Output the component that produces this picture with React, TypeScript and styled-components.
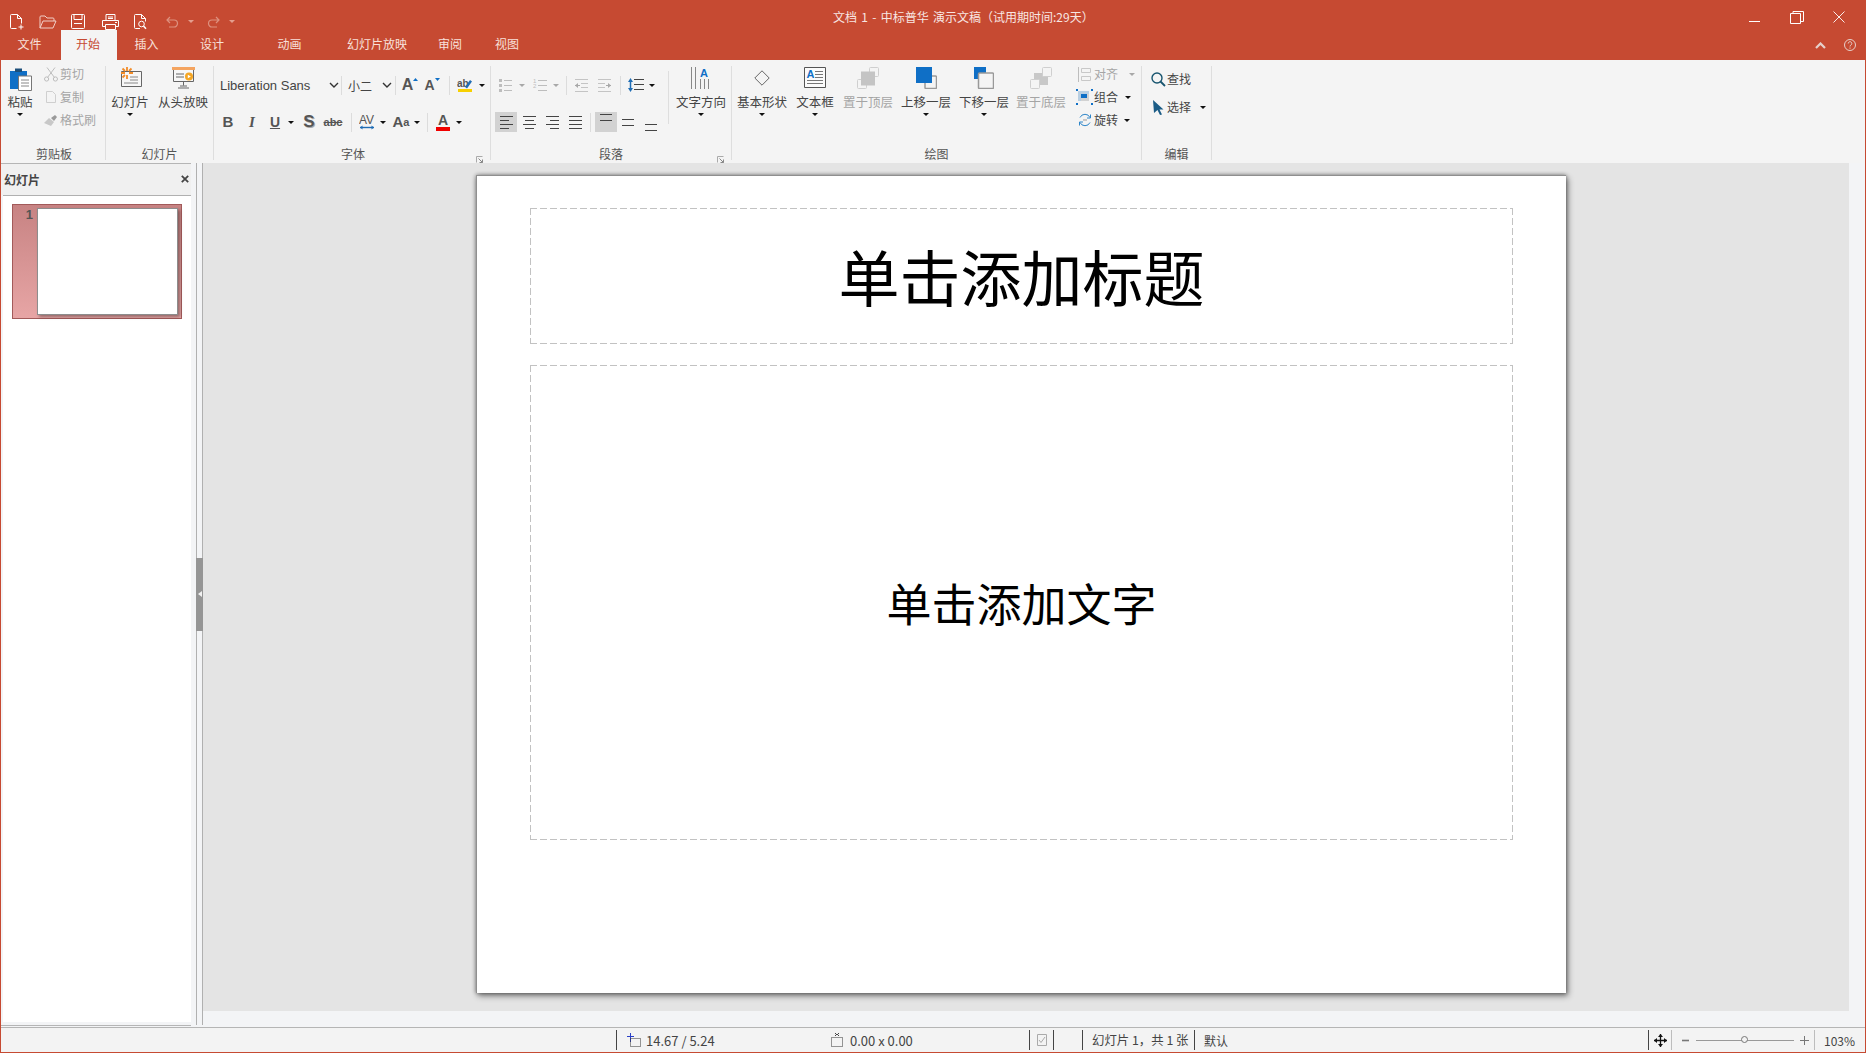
import React from 'react';
import styled, { createGlobalStyle } from 'styled-components';

const RED = '#c64a32';
const CJK = '"Noto Sans CJK SC", "Noto Sans", sans-serif';
const LATIN = '"Liberation Sans", "Noto Sans CJK SC", sans-serif';
const SERIF = '"Liberation Serif", serif';

const GlobalStyle = createGlobalStyle`
  html, body { margin: 0; padding: 0; background: ${RED}; }
  body { font-family: ${CJK}; font-size: 12px; color: #444; overflow: hidden; }
  svg { display: block; }
`;

const Window = styled.div`
  width: 1866px;
  height: 1053px;
  box-sizing: border-box;
  border: 1px solid ${RED};
  border-top: 0;
  display: flex;
  flex-direction: column;
  overflow: hidden;
`;

/* title bar */
const TitleBar = styled.div`
  height: 30px;
  flex: none;
  background: ${RED};
  display: flex;
  align-items: flex-start;
  color: #f8e6e2;
`;
const QuickBar = styled.div`
  width: 832px;
  flex: none;
  display: flex;
  align-items: center;
  padding-top: 13px;
  box-sizing: border-box;
  height: 30px;
`;
const QuickItem = styled.div<{ $ml: number }>`
  margin-left: ${p => p.$ml}px;
  flex: none;
`;
const DocTitle = styled.div`
  font-size: 12px;
  line-height: 16px;
  margin-top: 9px;
  word-spacing: 1.6px;
  white-space: nowrap;
`;
const WinButtons = styled.div`
  margin-left: auto;
  display: flex;
  align-items: flex-start;
  padding-top: 11px;
  margin-right: 20px;
  gap: 29px;
`;

/* tab row */
const TabRow = styled.div`
  height: 30px;
  flex: none;
  background: ${RED};
  display: flex;
  align-items: stretch;
`;
const Tab = styled.div<{ $w: number; $pr?: number; $active?: boolean }>`
  width: ${p => p.$w}px;
  flex: none;
  box-sizing: border-box;
  padding-right: ${p => p.$pr ?? 0}px;
  text-align: center;
  font-size: 12px;
  line-height: 28px;
  color: ${p => (p.$active ? RED : '#f8e0da')};
  background: ${p => (p.$active ? '#f4f4f4' : 'transparent')};
`;
const TabTools = styled.div`
  margin-left: auto;
  display: flex;
  align-items: center;
  gap: 18px;
  padding-right: 9px;
`;

/* ribbon */
const Ribbon = styled.div`
  height: 103px;
  flex: none;
  box-sizing: border-box;
  background: #f4f4f4;
  display: flex;
  padding-top: 6px;
`;
const Group = styled.div<{ $w: number }>`
  position: relative;
  width: ${p => p.$w}px;
  height: 94px;
  flex: none;
  box-sizing: border-box;
  border-right: 1px solid #dedede;
  display: flex;
  flex-direction: column;
`;
const GroupBody = styled.div`
  display: flex;
  height: 79px;
  flex: none;
`;
const GroupLabel = styled.div<{ $pl?: number }>`
  height: 18px;
  line-height: 18px;
  padding-left: ${p => p.$pl ?? 0}px;
  text-align: center;
  font-size: 12px;
  color: #555;
  white-space: nowrap;
`;
const Launcher = styled.div`
  position: absolute;
  right: 7px;
  bottom: -3px;
`;
const LargeButton = styled.div<{ $w: number; $ml?: number; $off?: boolean }>`
  width: ${p => p.$w}px;
  margin-left: ${p => p.$ml ?? 0}px;
  flex: none;
  display: flex;
  flex-direction: column;
  align-items: center;
  color: ${p => (p.$off ? '#a5a5a5' : '#444')};
`;
const IconSlot = styled.div<{ $top?: number }>`
  height: ${p => 28 - (p.$top ?? 0)}px;
  display: flex;
  align-items: flex-start;
  justify-content: center;
  padding-top: ${p => p.$top ?? 0}px;
  margin-top: 1px;
  margin-bottom: -1px;
`;
const LargeLabel = styled.div`
  font-size: 12.5px;
  line-height: 16px;
  white-space: nowrap;
`;
const Caret = styled.span<{ $off?: boolean; $ml?: number; $mt?: number }>`
  display: block;
  flex: none;
  width: 0;
  height: 0;
  border-style: solid;
  border-width: 3px 3px 0;
  border-color: ${p => (p.$off ? '#a8a8a8' : '#111')} transparent transparent;
  margin-left: ${p => p.$ml ?? 0}px;
  margin-top: ${p => p.$mt ?? 0}px;
`;
const SmallColumn = styled.div<{ $top?: number; $gap?: number; $ml?: number }>`
  display: flex;
  flex-direction: column;
  gap: ${p => p.$gap ?? 7}px;
  padding-top: ${p => p.$top ?? 0}px;
  margin-left: ${p => p.$ml ?? 0}px;
`;
const SmallItem = styled.div<{ $off?: boolean }>`
  height: 16px;
  display: flex;
  align-items: center;
  font-size: 12px;
  line-height: 16px;
  white-space: nowrap;
  color: ${p => (p.$off ? '#a5a5a5' : '#444')};
`;
const SmallIcon = styled.div<{ $w: number }>`
  width: ${p => p.$w}px;
  flex: none;
  display: flex;
  justify-content: center;
  margin-right: 1px;
`;
const ToolRows = styled.div<{ $w: number }>`
  width: ${p => p.$w}px;
  flex: none;
  display: flex;
  flex-direction: column;
  padding-top: 8px;
  gap: 15px;
`;
const ToolRow = styled.div`
  height: 22px;
  display: flex;
  align-items: center;
`;
const Tool = styled.div<{ $w: number; $ml: number; $on?: boolean; $start?: boolean }>`
  width: ${p => p.$w}px;
  margin-left: ${p => p.$ml}px;
  height: 20px;
  flex: none;
  display: flex;
  align-items: center;
  justify-content: ${p => (p.$start ? 'flex-start' : 'center')};
  background: ${p => (p.$on ? '#d2d2d2' : 'transparent')};
`;
const ToolSep = styled.div<{ $ml: number }>`
  width: 1px;
  height: 19px;
  flex: none;
  margin-left: ${p => p.$ml}px;
  background: #dcdcdc;
`;
const ColumnSep = styled.div`
  width: 1px;
  height: 53px;
  flex: none;
  margin-top: 5px;
  background: #dedede;
`;
const FontName = styled.div`
  font-family: ${LATIN};
  font-size: 13px;
  color: #444;
  white-space: nowrap;
`;
const FontSize = styled.div`
  font-size: 12px;
  color: #444;
  white-space: nowrap;
`;
const Letter = styled.span<{ $size?: number; $serif?: boolean; $italic?: boolean; $bold?: boolean; $under?: boolean; $strike?: boolean; $shadow?: boolean }>`
  font-family: ${p => (p.$serif ? SERIF : LATIN)};
  font-size: ${p => p.$size ?? 14}px;
  line-height: 14px;
  font-weight: ${p => (p.$bold ? 700 : 400)};
  font-style: ${p => (p.$italic ? 'italic' : 'normal')};
  text-decoration: ${p => (p.$under ? 'underline' : p.$strike ? 'line-through' : 'none')};
  text-shadow: ${p => (p.$shadow ? '1px 1px 0 #aaa' : 'none')};
  color: #555;
  white-space: nowrap;
`;
const StackedLetter = styled.div<{ $bar: string }>`
  display: flex;
  flex-direction: column;
  align-items: center;
  font-family: ${LATIN};
  line-height: 12px;
  color: #555;
  font-size: 14px;
  font-weight: 700;
  &::after {
    content: '';
    display: block;
    width: 14px;
    height: 4px;
    background: ${p => p.$bar};
    margin-top: 1px;
  }
`;
const Raised = styled.span`
  display: inline-flex;
  align-items: flex-start;
`;

/* main */
const Main = styled.div`
  flex: 1;
  min-height: 0;
  display: flex;
  background: #f3f4f6;
`;
const Panel = styled.div`
  width: 190px;
  flex: none;
  box-sizing: border-box;
  background: #f3f4f6;
  border-top: 1px solid #b5b5b5;
  border-bottom: 1px solid #b5b5b5;
  display: flex;
  flex-direction: column;
  margin-bottom: 1px;
`;
const PanelHead = styled.div`
  height: 31px;
  flex: none;
  box-sizing: border-box;
  background: #f0f0f0;
  padding: 0 1px 1px 3px;
  display: flex;
  align-items: center;
  justify-content: space-between;
  font-size: 12px;
  font-weight: 700;
  color: #444;
`;
const PanelHeadClose = styled.div`
  margin-right: 1px;
`;
const PanelList = styled.div`
  flex: 1;
  margin: 0 0 3px 2px;
  padding: 8px 0 0 9px;
  background: #fff;
  border-top: 1px solid #b0b0b0;
`;
const Thumb = styled.div`
  width: 170px;
  height: 115px;
  box-sizing: border-box;
  border: 1px solid #a25a5a;
  background: linear-gradient(#c78383, #e7a5a5);
  display: flex;
  padding: 3px 3px 0 0;
`;
const ThumbNo = styled.div`
  width: 24px;
  flex: none;
  text-align: right;
  padding-right: 4px;
  box-sizing: border-box;
  font-family: ${LATIN};
  font-size: 13px;
  font-weight: 700;
  line-height: 14px;
  color: #555;
`;
const ThumbPage = styled.div`
  width: 141px;
  height: 107px;
  box-sizing: border-box;
  background: #fff;
  border: 1px solid #8d8d8d;
  box-shadow: 2px 2px 3px rgba(0, 0, 0, 0.35);
`;
const Splitter = styled.div`
  width: 12px;
  flex: none;
  background: #f3f4f6;
  padding-left: 5px;
  box-sizing: border-box;
`;
const SplitRail = styled.div`
  width: 7px;
  height: 862px;
  box-sizing: border-box;
  border-left: 1px solid #b0b0b0;
  border-right: 1px solid #b0b0b0;
  display: flex;
  align-items: center;
`;
const SplitHandle = styled.div`
  width: 7px;
  height: 73px;
  flex: none;
  margin-left: -1px;
  background: #959595;
  display: flex;
  align-items: center;
  justify-content: center;
  &::before {
    content: '';
    border-style: solid;
    border-width: 3.5px 4px 3.5px 0;
    border-color: transparent #f2f2f2 transparent transparent;
  }
`;
const Workspace = styled.div`
  flex: 1;
  min-width: 0;
  background: #f3f4f6;
  padding: 0 16px 16px 0;
  box-sizing: border-box;
`;
const Canvas = styled.div`
  height: 100%;
  background: #e4e4e4;
  padding: 12px 0 0 273px;
  box-sizing: border-box;
`;
const Slide = styled.div`
  width: 1090px;
  height: 818px;
  box-sizing: border-box;
  background: #fff;
  padding: 33px 53px 0 54px;
  box-shadow: inset 1px 1px 0 #8f8f8f, 0 0 4px rgba(0, 0, 0, 0.45), 2px 3px 6px rgba(0, 0, 0, 0.45);
  display: flex;
  flex-direction: column;
  gap: 21px;
`;
const dash = (dir: string) => `repeating-linear-gradient(${dir}, #c2c2c2 0 7px, transparent 7px 10px)`;
const Placeholder = styled.div<{ $h: number; $size: number }>`
  height: ${p => p.$h}px;
  flex: none;
  box-sizing: border-box;
  background:
    ${dash('90deg')} left top / 100% 1px no-repeat,
    ${dash('90deg')} left bottom / 100% 1px no-repeat,
    ${dash('180deg')} left top / 1px 100% no-repeat,
    ${dash('180deg')} right top / 1px 100% no-repeat;
  display: flex;
  align-items: center;
  justify-content: center;
  font-size: ${p => p.$size}px;
  color: #000;
  padding-bottom: 1px;
`;

/* status bar */
const StatusBar = styled.div`
  height: 25px;
  flex: none;
  box-sizing: border-box;
  background: #f3f3f3;
  border-top: 1px solid #b5b5b5;
  display: flex;
  align-items: center;
  font-size: 12px;
  color: #444;
`;
const StatusCell = styled.div<{ $w: number; $first?: boolean; $light?: boolean; $pl?: number }>`
  width: ${p => p.$w}px;
  height: 20px;
  flex: none;
  box-sizing: border-box;
  border-left: ${p => (p.$first ? '0' : `1px solid ${p.$light ? '#bdbdbd' : '#444'}`)};
  padding-left: ${p => p.$pl ?? 0}px;
  display: flex;
  align-items: center;
  white-space: nowrap;
`;
const StatusIcon = styled.div<{ $mr: number }>`
  margin-right: ${p => p.$mr}px;
  flex: none;
`;
const StatusValue = styled.div<{ $w?: number }>`
  width: ${p => (p.$w ? `${p.$w}px` : 'auto')};
  font-size: 13px;
  flex: none;
`;
const SlideCount = styled.div`
  font-size: 12.4px;
`;
const ZoomTrack = styled.div`
  position: relative;
  width: 98px;
  height: 1px;
  background: #999;
  margin: 0 6px;
  flex: none;
`;
const ZoomKnob = styled.div`
  position: absolute;
  left: 45px;
  top: -4px;
  width: 7px;
  height: 7px;
  box-sizing: border-box;
  border: 1px solid #777;
  border-radius: 50%;
  background: #f3f3f3;
`;

const Svg = ({ w, h, children, style }: { w: number; h: number; children: React.ReactNode; style?: React.CSSProperties }) => (
  <svg width={w} height={h} viewBox={`0 0 ${w} ${h}`} fill="none" style={style}>
    {children}
  </svg>
);

/* quick access icons */
const NewIcon = () => (
  <Svg w={14} h={16}>
    <path d="M6.5 14.5H1.5a1 1 0 0 1-1-1V1.5a1 1 0 0 1 1-1h6l4 4v5M7.5 .5v4h4" stroke="#fff" />
    <path d="M11 10.5v5M8.5 13h5" stroke="#fff" />
  </Svg>
);
const OpenIcon = () => (
  <Svg w={18} h={14}>
    <path d="M1 13V2a1 1 0 0 1 1-1h4l2 2h6a1 1 0 0 1 1 1v2" stroke="#f1cfc7" />
    <path d="M1 13l3-7h13l-3 7z" stroke="#f1cfc7" />
  </Svg>
);
const SaveIcon = () => (
  <Svg w={14} h={15}>
    <path d="M1.5 .5h11a1 1 0 0 1 1 1v12a1 1 0 0 1-1 1h-11a1 1 0 0 1-1-1v-12a1 1 0 0 1 1-1z" stroke="#fff" />
    <path d="M3 .5v5h8v-5M3 9.5h8" stroke="#fff" />
  </Svg>
);
const PrintIcon = () => (
  <Svg w={17} h={16}>
    <path d="M4 6V.5h9V6M.5 6.5h16v6h-3M3.500 12.500h-3v-6" stroke="#fff" />
    <path d="M3.500 10.500h10v5h-10zM6 3h5M6 4.500h5M13 8.500h2" stroke="#fff" />
  </Svg>
);
const PreviewIcon = () => (
  <Svg w={13} h={16}>
    <path d="M6 14.500H1.500a1 1 0 0 1-1-1v-12a1 1 0 0 1 1-1h6l4 4v3M7.500 .5v4h4" stroke="#fff" />
    <circle cx="7.500" cy="10" r="2.800" stroke="#fff" />
    <path d="M9.500 12l2.500 2.800" stroke="#fff" strokeWidth="1.500" />
  </Svg>
);
const UndoIcon = ({ flip }: { flip?: boolean }) => (
  <Svg w={13} h={12} style={flip ? { transform: 'scaleX(-1)' } : undefined}>
    <path d="M4 1L1 4l3 3M1 4h7a3.500 3.500 0 0 1 0 7H3" stroke="#dd917f" strokeWidth="1.200" />
  </Svg>
);
const QuickCaret = () => (
  <Svg w={6} h={3}>
    <path d="M0 0h6L3 3z" fill="#e49e8e" />
  </Svg>
);
const MinIcon = () => (
  <Svg w={12} h={12}>
    <path d="M0 10.500h11" stroke="#fff" />
  </Svg>
);
const RestoreIcon = () => (
  <Svg w={14} h={14}>
    <path d="M.5 2.500h10v10H.5zM3 2.500V.5h10.500v10h-3" stroke="#fff" />
  </Svg>
);
const CloseIcon = () => (
  <Svg w={12} h={12}>
    <path d="M.5 .5l11 11M11.500 .5l-11 11" stroke="#fff" strokeWidth=".9" />
  </Svg>
);
const CollapseIcon = () => (
  <Svg w={11} h={7}>
    <path d="M1 6l4.500-4.500L10 6" stroke="#e6d0cb" strokeWidth="2.200" />
  </Svg>
);
const HelpIcon = () => (
  <svg width="12" height="12" viewBox="0 0 12 12" fill="none">
    <circle cx="6" cy="6" r="5.500" stroke="#e6d0cb" />
    <path d="M4.200 4.500a1.800 1.800 0 1 1 2.800 1.500c-.7.4-1 .8-1 1.500M6 8.500v1.200" stroke="#e6d0cb" />
  </svg>
);

/* clipboard */
const PasteIcon = () => (
  <Svg w={23} h={24}>
    <path d="M1 4h17v18H1z" fill="#0f6fc6" />
    <path d="M6 1.500h7V5H6z" fill="#1c4f7a" />
    <path d="M9.500 9h13v14.500h-13z" fill="#fff" stroke="#777" />
    <path d="M12 13h8M12 16h8M12 19h8" stroke="#888" />
  </Svg>
);
const CutIcon = () => (
  <Svg w={14} h={15}>
    <path d="M3 .5l7.500 10M11 .5L3.500 10.500" stroke="#bdbdbd" />
    <circle cx="2.600" cy="12" r="2.100" stroke="#bdbdbd" />
    <circle cx="11.400" cy="12" r="2.100" stroke="#bdbdbd" />
  </Svg>
);
const CopyIcon = () => (
  <Svg w={10} h={12}>
    <path d="M.5 .5h6l3 3v8h-9z" stroke="#cfcfcf" />
  </Svg>
);
const BrushIcon = () => (
  <Svg w={14} h={13}>
    <path d="M5 4l5 4-3 4-7-3z" fill="#c8c8c8" />
    <path d="M7 4l4-3 2 2-3 4z" fill="#9a9a9a" />
  </Svg>
);

/* slides */
const NewSlideIcon = () => (
  <Svg w={24} h={20}>
    <path d="M3.500 4.500h20v15h-20z" fill="#f7f7f7" stroke="#666" />
    <path d="M12 10h8M12 13h8M6 16h14" stroke="#888" />
    <path d="M9 0v4M9 8v4M3 6h4M11 6h4M4.500 1.500L7 4M13.500 1.500L11 4M4.500 10.500L7 8" stroke="#f28c28" strokeWidth="1.800" />
  </Svg>
);
const ShowIcon = () => (
  <Svg w={23} h={22}>
    <path d="M0 0h23v3H0z" fill="#f4a460" />
    <path d="M1.500 3v11.500h20V3" fill="#f7f7f7" stroke="#666" />
    <path d="M4 7h8M4 10h8M11.500 14.500v4M6 21h11M8 19h7" stroke="#666" />
    <circle cx="17" cy="9.500" r="4" fill="#f5a623" />
    <path d="M15.800 7.800l3 1.700-3 1.700z" fill="#fff" />
  </Svg>
);

/* font */
const Chevron = () => (
  <Svg w={10} h={6}>
    <path d="M1 1l4 4 4-4" stroke="#333" strokeWidth="1.400" />
  </Svg>
);
const MiniArrow = ({ up, color }: { up?: boolean; color?: string }) => (
  <Svg w={5} h={3}>
    <path d={up ? 'M0 3h5L2.500 0z' : 'M0 0h5L2.500 3z'} fill={color ?? '#0f6fc6'} />
  </Svg>
);
const HighlightIcon = () => (
  <Svg w={16} h={14}>
    <text x="0" y="9" fontFamily="Liberation Sans" fontSize="10" fill="#555" fontWeight="700">ab</text>
    <path d="M8 9l5-7 2 1.500-5 7z" fill="#1f6db5" />
    <path d="M1 11h14v3H1z" fill="#f7d000" />
  </Svg>
);
const SpacingIcon = () => (
  <Svg w={16} h={16}>
    <text x="0" y="10" fontFamily="Liberation Sans" fontSize="12" fill="#555">AV</text>
    <path d="M1 13.500h14" stroke="#1f6db5" strokeWidth="1.400" />
    <path d="M3.500 11.500L1 13.500l2.500 2zM12.500 11.500l2.500 2-2.500 2z" fill="#1f6db5" />
  </Svg>
);
const DialogIcon = () => (
  <Svg w={7} h={7}>
    <path d="M.5 6.500v-6h6" stroke="#aaa" />
    <path d="M2.500 2.500l4 4M6.500 3.500v3h-3" stroke="#888" />
  </Svg>
);

/* paragraph */
const BulletIcon = () => (
  <Svg w={13} h={14}>
    <path d="M0 1h3v3H0zM0 6h3v3H0zM0 11h3v3H0z" fill="#bdbdbd" />
    <path d="M5 2.500h8M5 7.500h8M5 12.500h8" stroke="#bdbdbd" />
  </Svg>
);
const NumberIcon = () => (
  <Svg w={14} h={14}>
    <text x="0" y="5" fontSize="6" fontFamily="Liberation Sans" fill="#bdbdbd">1</text>
    <text x="0" y="10" fontSize="6" fontFamily="Liberation Sans" fill="#bdbdbd">2</text>
    <path d="M5 2.500h9M5 7.500h9M5 12.500h9" stroke="#bdbdbd" />
  </Svg>
);
const IndentIcon = ({ flip }: { flip?: boolean }) => (
  <Svg w={13} h={13} style={flip ? { transform: 'scaleX(-1)' } : undefined}>
    <path d="M0 .5h13M6 4.500h7M6 8.500h7M0 12.500h13" stroke="#c4c4c4" />
    <path d="M0 6.500h5" stroke="#a8a8a8" />
    <path d="M0 6.500L3 4v5z" fill="#a8a8a8" />
  </Svg>
);
const LineHeightIcon = () => (
  <Svg w={16} h={16}>
    <path d="M6 2.500h10M6 7.500h10M6 12.500h10" stroke="#444" strokeWidth="1.200" />
    <path d="M2.500 4v8" stroke="#1f6db5" strokeWidth="1.500" />
    <path d="M0 5l2.500-4L5 5zM0 11l2.500 4L5 11z" fill="#1f6db5" />
  </Svg>
);
const AlignIcon = ({ rows, w = 13, h = 14 }: { rows: [number, number, number][]; w?: number; h?: number }) => (
  <Svg w={w} h={h}>
    {rows.map(([x1, x2, y]) => (
      <path key={y} d={`M${x1} ${y}.5H${x2}`} stroke="#444" />
    ))}
  </Svg>
);
const TextDirIcon = () => (
  <Svg w={20} h={22}>
    <path d="M.5 0v22M4.500 0v22" stroke="#888" />
    <path d="M9.500 12v10M13.500 12v10M17.500 12v10" stroke="#888" />
    <text x="9" y="10" fontFamily="Liberation Sans" fontSize="11" fontWeight="700" fill="#0f6fc6">A</text>
  </Svg>
);

/* drawing */
const DiamondIcon = () => (
  <Svg w={16} h={16}>
    <path d="M8 .8L15.200 8 8 15.200.8 8z" stroke="#666" />
  </Svg>
);
const TextBoxIcon = () => (
  <Svg w={22} h={21}>
    <path d="M.5 .5h21v20H.5z" stroke="#555" fill="#fbfbfb" />
    <text x="2.500" y="11" fontFamily="Liberation Sans" fontSize="11" fontWeight="700" fill="#0f6fc6">A</text>
    <path d="M11 4.500h8M11 7.500h8M11 10.500h8M3 13.500h16M3 16.500h16" stroke="#777" />
  </Svg>
);
const FrontIcon = () => (
  <Svg w={22} h={22}>
    <rect x="12.500" y=".5" width="9" height="9" rx="1" stroke="#cfcfcf" />
    <rect x=".5" y="12.500" width="9" height="9" rx="1" stroke="#cfcfcf" />
    <path d="M4 4.500h14v14H4z" fill="#c4c4c4" />
  </Svg>
);
const UpIcon = () => (
  <Svg w={21} h={22}>
    <rect x="9" y="9" width="11.500" height="12.500" rx="1" stroke="#999" strokeWidth="1.500" />
    <path d="M0 0h16v16H0z" fill="#0f6fc6" />
  </Svg>
);
const DownIcon = () => (
  <Svg w={20} h={22}>
    <path d="M0 0h12v12H0z" fill="#0f6fc6" />
    <rect x="4.500" y="6" width="15" height="15.500" rx="1" fill="#f4f4f4" stroke="#999" strokeWidth="1.500" />
  </Svg>
);
const BackIcon = () => (
  <Svg w={22} h={22}>
    <path d="M4 6h14v12H4z" fill="#c8c8c8" />
    <rect x="12.500" y=".5" width="9" height="9" rx="1" fill="#f4f4f4" stroke="#cfcfcf" />
    <rect x=".5" y="12.500" width="9" height="9" rx="1" fill="#f4f4f4" stroke="#cfcfcf" />
  </Svg>
);
const AlignObjIcon = () => (
  <Svg w={13} h={15}>
    <path d="M.5 0v15" stroke="#bdbdbd" />
    <path d="M3.500 1.500h9v4h-9zM3.500 9.500h9v4h-9z" stroke="#c8c8c8" />
  </Svg>
);
const GroupIcon = () => (
  <Svg w={17} h={16}>
    <path d="M0 0h2v2H0zM15 0h2v2h-2zM0 14h2v2H0zM15 14h2v2h-2z" fill="#0f6fc6" />
    <path d="M2 2h11v10H2z" fill="#b9cfe2" />
    <path d="M5 5h8v7H5z" fill="#d2d2d2" />
    <path d="M5 5h6v4H5z" fill="#0f6fc6" />
  </Svg>
);
const RotateIcon = () => (
  <Svg w={14} h={14}>
    <path d="M2 4.500A5.500 5.500 0 0 1 12 4.500M12 9.500A5.500 5.500 0 0 1 2 9.500" stroke="#2f86c9" />
    <path d="M12.500 1.500v3.500H9M1.500 12.500V9H5" stroke="#2f86c9" />
    <path d="M5 7h4" stroke="#999" />
  </Svg>
);
const FindIcon = () => (
  <Svg w={15} h={15}>
    <circle cx="6" cy="6" r="5" stroke="#18556f" strokeWidth="1.400" />
    <path d="M9.500 9.500L14 14" stroke="#18556f" strokeWidth="1.800" />
  </Svg>
);
const SelectIcon = () => (
  <Svg w={11} h={15}>
    <path d="M0 0l10.500 9.500H6.500L9 14.500 7 15 4.500 10 1 13z" fill="#1b5c86" />
  </Svg>
);

/* status bar */
const PosIcon = () => (
  <Svg w={14} h={14}>
    <path d="M3.500 0v9M0 3.500h7" stroke="#2a3fc7" />
    <path d="M3.500 5.500h10v8h-10z" stroke="#333" strokeDasharray="1 1" />
  </Svg>
);
const SizeIcon = () => (
  <Svg w={14} h={14}>
    <path d="M1.500 4.500h11v9h-11z" stroke="#333" strokeDasharray="1 1" />
    <path d="M5 0h1v1H5zM8 0h1v1H8zM6 1h2v1H6zM5 2h1v1H5zM8 2h1v1H8z" fill="#444" />
  </Svg>
);
const NoteIcon = () => (
  <Svg w={10} h={12}>
    <path d="M.5 .5h9v11h-9z" stroke="#aaa" />
    <path d="M2 6l2 2.500L8 3" stroke="#aaa" />
  </Svg>
);
const FitIcon = () => (
  <Svg w={13} h={13}>
    <path d="M6.500 0v13M0 6.500h13" stroke="#111" strokeWidth="1.300" />
    <path d="M6.500 0L4 3h5zM6.500 13L4 10h5zM0 6.500L3 4v5zM13 6.500L10 4v5z" fill="#111" />
  </Svg>
);
const ZoomSign = ({ plus }: { plus?: boolean }) => (
  <Svg w={9} h={9}>
    <path d={plus ? 'M0 4.500h9M4.500 0v9' : 'M1 4.500h7'} stroke="#777" strokeWidth={plus ? 1 : 1.600} />
  </Svg>
);

const App = () => (
  <>
    <GlobalStyle />
    <Window>
      <TitleBar>
        <QuickBar>
          <QuickItem $ml={9}><NewIcon /></QuickItem>
          <QuickItem $ml={15}><OpenIcon /></QuickItem>
          <QuickItem $ml={14}><SaveIcon /></QuickItem>
          <QuickItem $ml={17}><PrintIcon /></QuickItem>
          <QuickItem $ml={15}><PreviewIcon /></QuickItem>
          <QuickItem $ml={19}><UndoIcon /></QuickItem>
          <QuickItem $ml={9}><QuickCaret /></QuickItem>
          <QuickItem $ml={13}><UndoIcon flip /></QuickItem>
          <QuickItem $ml={9}><QuickCaret /></QuickItem>
        </QuickBar>
        <DocTitle>文档 1 - 中标普华 演示文稿（试用期时间:29天）</DocTitle>
        <WinButtons>
          <MinIcon />
          <RestoreIcon />
          <CloseIcon />
        </WinButtons>
      </TitleBar>

      <TabRow>
        <Tab $w={60} $pr={3}>文件</Tab>
        <Tab $w={56} $pr={2} $active>开始</Tab>
        <Tab $w={59}>插入</Tab>
        <Tab $w={72}>设计</Tab>
        <Tab $w={84} $pr={1}>动画</Tab>
        <Tab $w={90}>幻灯片放映</Tab>
        <Tab $w={56}>审阅</Tab>
        <Tab $w={58}>视图</Tab>
        <TabTools>
          <CollapseIcon />
          <HelpIcon />
        </TabTools>
      </TabRow>

      <Ribbon>
        <Group $w={105}>
          <GroupBody>
            <LargeButton $w={32} $ml={3}>
              <IconSlot><PasteIcon /></IconSlot>
              <LargeLabel>粘贴</LargeLabel>
              <Caret $mt={3} />
            </LargeButton>
            <SmallColumn $ml={6}>
              <SmallItem $off><SmallIcon $w={17}><CutIcon /></SmallIcon>剪切</SmallItem>
              <SmallItem $off><SmallIcon $w={17}><CopyIcon /></SmallIcon>复制</SmallItem>
              <SmallItem $off><SmallIcon $w={17}><BrushIcon /></SmallIcon>格式刷</SmallItem>
            </SmallColumn>
          </GroupBody>
          <GroupLabel $pl={2}>剪贴板</GroupLabel>
        </Group>

        <Group $w={108}>
          <GroupBody>
            <LargeButton $w={46} $ml={1}>
              <IconSlot><NewSlideIcon /></IconSlot>
              <LargeLabel>幻灯片</LargeLabel>
              <Caret $mt={3} />
            </LargeButton>
            <LargeButton $w={48} $ml={6}>
              <IconSlot><ShowIcon /></IconSlot>
              <LargeLabel>从头放映</LargeLabel>
            </LargeButton>
          </GroupBody>
          <GroupLabel>幻灯片</GroupLabel>
        </Group>

        <Group $w={277}>
          <GroupBody>
            <ToolRows $w={276}>
              <ToolRow>
                <Tool $w={108} $ml={6} $start><FontName>Liberation Sans</FontName></Tool>
                <Tool $w={10} $ml={1}><Chevron /></Tool>
                <ToolSep $ml={2} />
                <Tool $w={24} $ml={6}><FontSize>小二</FontSize></Tool>
                <Tool $w={10} $ml={10}><Chevron /></Tool>
                <ToolSep $ml={3} />
                <Tool $w={16} $ml={6}><Raised><Letter $size={16} $bold>A</Letter><MiniArrow up /></Raised></Tool>
                <Tool $w={14} $ml={7}><Raised><Letter $size={14} $bold>A</Letter><MiniArrow /></Raised></Tool>
                <ToolSep $ml={10} />
                <Tool $w={16} $ml={7}><HighlightIcon /></Tool>
                <Tool $w={8} $ml={5}><Caret /></Tool>
              </ToolRow>
              <ToolRow>
                <Tool $w={14} $ml={7}><Letter $size={15} $bold>B</Letter></Tool>
                <Tool $w={14} $ml={10}><Letter $size={15} $serif $italic $bold>I</Letter></Tool>
                <Tool $w={14} $ml={9}><Letter $bold $under>U</Letter></Tool>
                <Tool $w={8} $ml={5}><Caret /></Tool>
                <Tool $w={16} $ml={6}><Letter $size={17} $bold $shadow>S</Letter></Tool>
                <Tool $w={20} $ml={6}><Letter $size={11} $bold $strike>abc</Letter></Tool>
                <ToolSep $ml={8} />
                <Tool $w={18} $ml={6}><SpacingIcon /></Tool>
                <Tool $w={8} $ml={3}><Caret /></Tool>
                <Tool $w={18} $ml={5}><Letter $size={15} $bold>A</Letter><Letter $size={11} $bold>a</Letter></Tool>
                <Tool $w={8} $ml={3}><Caret /></Tool>
                <ToolSep $ml={6} />
                <Tool $w={16} $ml={7}><StackedLetter $bar="#f00000">A</StackedLetter></Tool>
                <Tool $w={8} $ml={4}><Caret /></Tool>
              </ToolRow>
            </ToolRows>
          </GroupBody>
          <GroupLabel $pl={2}>字体</GroupLabel>
          <Launcher><DialogIcon /></Launcher>
        </Group>

        <Group $w={241}>
          <GroupBody>
            <ToolRows $w={177}>
              <ToolRow>
                <Tool $w={13} $ml={8}><BulletIcon /></Tool>
                <Tool $w={8} $ml={6}><Caret $off /></Tool>
                <Tool $w={14} $ml={7}><NumberIcon /></Tool>
                <Tool $w={8} $ml={5}><Caret $off /></Tool>
                <ToolSep $ml={6} />
                <Tool $w={13} $ml={8}><IndentIcon /></Tool>
                <Tool $w={13} $ml={10}><IndentIcon flip /></Tool>
                <ToolSep $ml={9} />
                <Tool $w={16} $ml={7}><LineHeightIcon /></Tool>
                <Tool $w={8} $ml={4}><Caret /></Tool>
              </ToolRow>
              <ToolRow>
                <Tool $w={22} $ml={4} $on><AlignIcon rows={[[0, 13, 1], [0, 9, 5], [0, 13, 9], [0, 9, 13]]} /></Tool>
                <Tool $w={13} $ml={6}><AlignIcon rows={[[0, 13, 1], [2, 11, 5], [0, 13, 9], [2, 11, 13]]} /></Tool>
                <Tool $w={13} $ml={10}><AlignIcon rows={[[0, 13, 1], [4, 13, 5], [0, 13, 9], [4, 13, 13]]} /></Tool>
                <Tool $w={13} $ml={10}><AlignIcon rows={[[0, 13, 1], [0, 13, 5], [0, 13, 9], [0, 13, 13]]} /></Tool>
                <ToolSep $ml={8} />
                <Tool $w={22} $ml={4} $on><AlignIcon w={12} h={20} rows={[[0, 12, 2], [0, 12, 8]]} /></Tool>
                <Tool $w={12} $ml={5}><AlignIcon w={12} h={20} rows={[[0, 12, 7], [0, 12, 13]]} /></Tool>
                <Tool $w={12} $ml={11}><AlignIcon w={12} h={20} rows={[[0, 12, 12], [0, 12, 18]]} /></Tool>
              </ToolRow>
            </ToolRows>
            <ColumnSep />
            <LargeButton $w={48} $ml={8}>
              <IconSlot><TextDirIcon /></IconSlot>
              <LargeLabel>文字方向</LargeLabel>
              <Caret $mt={3} />
            </LargeButton>
          </GroupBody>
          <GroupLabel>段落</GroupLabel>
          <Launcher><DialogIcon /></Launcher>
        </Group>

        <Group $w={410}>
          <GroupBody>
            <LargeButton $w={52} $ml={4}>
              <IconSlot $top={3}><DiamondIcon /></IconSlot>
              <LargeLabel>基本形状</LargeLabel>
              <Caret $mt={3} />
            </LargeButton>
            <LargeButton $w={52} $ml={1}>
              <IconSlot><TextBoxIcon /></IconSlot>
              <LargeLabel>文本框</LargeLabel>
              <Caret $mt={3} />
            </LargeButton>
            <LargeButton $w={54} $off>
              <IconSlot><FrontIcon /></IconSlot>
              <LargeLabel>置于顶层</LargeLabel>
            </LargeButton>
            <LargeButton $w={62}>
              <IconSlot><UpIcon /></IconSlot>
              <LargeLabel>上移一层</LargeLabel>
              <Caret $mt={3} />
            </LargeButton>
            <LargeButton $w={54}>
              <IconSlot><DownIcon /></IconSlot>
              <LargeLabel>下移一层</LargeLabel>
              <Caret $mt={3} />
            </LargeButton>
            <LargeButton $w={60} $off>
              <IconSlot><BackIcon /></IconSlot>
              <LargeLabel>置于底层</LargeLabel>
            </LargeButton>
            <SmallColumn $ml={5}>
              <SmallItem $off><SmallIcon $w={17}><AlignObjIcon /></SmallIcon>对齐<Caret $off $ml={11} /></SmallItem>
              <SmallItem><SmallIcon $w={17}><GroupIcon /></SmallIcon>组合<Caret $ml={7} /></SmallItem>
              <SmallItem><SmallIcon $w={17}><RotateIcon /></SmallIcon>旋转<Caret $ml={6} /></SmallItem>
            </SmallColumn>
          </GroupBody>
          <GroupLabel>绘图</GroupLabel>
        </Group>

        <Group $w={70}>
          <GroupBody>
            <SmallColumn $top={5} $gap={12} $ml={8}>
              <SmallItem><SmallIcon $w={16}><FindIcon /></SmallIcon>查找</SmallItem>
              <SmallItem><SmallIcon $w={16}><SelectIcon /></SmallIcon>选择<Caret $ml={9} /></SmallItem>
            </SmallColumn>
          </GroupBody>
          <GroupLabel>编辑</GroupLabel>
        </Group>
      </Ribbon>

      <Main>
        <Panel>
          <PanelHead>
            幻灯片
            <PanelHeadClose>
              <Svg w={8} h={8}>
                <path d="M.8 .8l6.400 6.400M7.200 .8L.8 7.200" stroke="#444" strokeWidth="1.800" />
              </Svg>
            </PanelHeadClose>
          </PanelHead>
          <PanelList>
            <Thumb>
              <ThumbNo>1</ThumbNo>
              <ThumbPage />
            </Thumb>
          </PanelList>
        </Panel>
        <Splitter>
          <SplitRail>
            <SplitHandle />
          </SplitRail>
        </Splitter>
        <Workspace>
          <Canvas>
            <Slide>
              <Placeholder $h={136} $size={61}>单击添加标题</Placeholder>
              <Placeholder $h={475} $size={45}>单击添加文字</Placeholder>
            </Slide>
          </Canvas>
        </Workspace>
      </Main>

      <StatusBar>
        <StatusCell $w={615} $first />
        <StatusCell $w={413} $pl={10}>
          <StatusIcon $mr={5}><PosIcon /></StatusIcon>
          <StatusValue $w={184}>14.67 / 5.24</StatusValue>
          <StatusIcon $mr={6}><SizeIcon /></StatusIcon>
          <StatusValue>0.00 x 0.00</StatusValue>
        </StatusCell>
        <StatusCell $w={24} $pl={7}><NoteIcon /></StatusCell>
        <StatusCell $w={29} />
        <StatusCell $w={112} $pl={9}><SlideCount>幻灯片 1，共 1 张</SlideCount></StatusCell>
        <StatusCell $w={454} $pl={9}>默认</StatusCell>
        <StatusCell $w={23} $pl={5}><FitIcon /></StatusCell>
        <StatusCell $w={143} $pl={9} $light>
          <ZoomSign />
          <ZoomTrack><ZoomKnob /></ZoomTrack>
          <ZoomSign plus />
        </StatusCell>
        <StatusCell $w={50} $pl={9} $light>103%</StatusCell>
      </StatusBar>
    </Window>
  </>
);

export default App;
